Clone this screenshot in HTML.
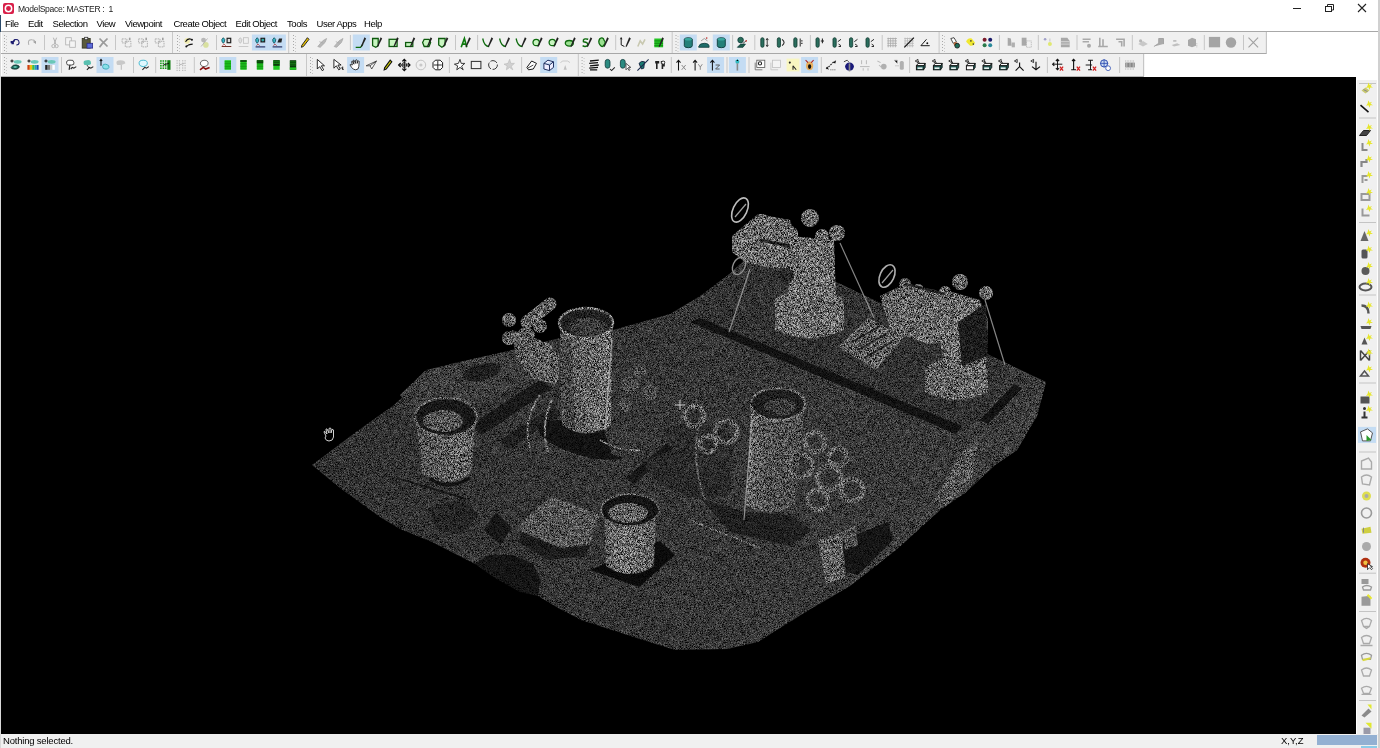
<!DOCTYPE html>
<html><head><meta charset="utf-8"><style>
html,body{margin:0;padding:0;width:1380px;height:748px;overflow:hidden;background:#fff;font-family:"Liberation Sans",sans-serif;}
.t{position:absolute;white-space:pre;color:#000;font-size:9.5px;line-height:12px;letter-spacing:-0.45px;transform:translateZ(0);}
</style></head><body>
<svg width="1380" height="748" style="position:absolute;left:0;top:0">
<rect x="0" y="0" width="1380" height="748" fill="#ffffff"/>
<rect x="0" y="15" width="1" height="17" fill="#2a4a6a"/>
<rect x="0" y="32" width="1" height="716" fill="#d8d8d8"/>
<rect x="1378" y="0" width="2" height="748" fill="#d0d0d0"/>
<!-- title icon -->
<rect x="3" y="3" width="11" height="11" rx="2" fill="#d81e48"/>
<circle cx="8.5" cy="8.5" r="3.2" fill="none" stroke="#fff" stroke-width="1.5"/>
<!-- window controls -->
<rect x="1293" y="8" width="8" height="1" fill="#222"/>
<rect x="1325.5" y="6.5" width="6" height="5" fill="none" stroke="#222" stroke-width="1"/>
<path d="M1327.5 6.5 L1327.5 4.5 L1333.5 4.5 L1333.5 10 L1331.5 10" fill="none" stroke="#222" stroke-width="1"/>
<path d="M1358 4 L1366 12 M1366 4 L1358 12" stroke="#222" stroke-width="1.1"/>
<!-- toolbar bands -->
<rect x="1" y="31" width="1377" height="1" fill="#a8a8a8"/>
<rect x="2" y="32" width="1265" height="21" fill="#f0f0f0"/>
<rect x="1" y="53" width="1266" height="1" fill="#a8a8a8"/>
<rect x="1266" y="32" width="1" height="22" fill="#c0c0c0"/>
<rect x="2" y="54" width="1142" height="22" fill="#f0f0f0"/>
<rect x="1" y="76" width="1143" height="1" fill="#b4b4b4"/>
<rect x="1143" y="54" width="1" height="22" fill="#c0c0c0"/>
<rect x="4" y="35" width="1" height="1" fill="#a8a8a8"/><rect x="6" y="36" width="1" height="1" fill="#c8c8c8"/><rect x="4" y="38" width="1" height="1" fill="#a8a8a8"/><rect x="6" y="39" width="1" height="1" fill="#c8c8c8"/><rect x="4" y="41" width="1" height="1" fill="#a8a8a8"/><rect x="6" y="42" width="1" height="1" fill="#c8c8c8"/><rect x="4" y="44" width="1" height="1" fill="#a8a8a8"/><rect x="6" y="45" width="1" height="1" fill="#c8c8c8"/><rect x="4" y="47" width="1" height="1" fill="#a8a8a8"/><rect x="6" y="48" width="1" height="1" fill="#c8c8c8"/><rect x="4" y="50" width="1" height="1" fill="#a8a8a8"/><rect x="6" y="51" width="1" height="1" fill="#c8c8c8"/><g transform="translate(9.1,36.1) scale(0.8)"><path d="M3 9 L7 5 M3 9 L3 6 M3 9 L6 9" stroke="#1a1a6e" stroke-width="2.2" fill="none"/><path d="M6 4.5 Q12 3 12.5 8 Q12.5 11 9 11" stroke="#1a1a6e" stroke-width="1.3" fill="none"/></g><g transform="translate(25.6,36.1) scale(0.8)"><path d="M4 11 Q2 4 8 4.5 Q11 4.5 12 7" stroke="#b0b0b0" stroke-width="1.3" fill="none"/><path d="M13 10 L9 7 L13 6 Z" fill="#a0a0a0"/></g><rect x="44" y="35" width="1" height="15" fill="#c6c6c6"/><g transform="translate(48.6,36.1) scale(0.8)"><path d="M6 2 L9 10 M10 2 L7 10" stroke="#a8a8a8" stroke-width="1.1" fill="none"/><circle cx="6" cy="12.5" r="2" fill="none" stroke="#a8a8a8"/><circle cx="10" cy="12.5" r="2" fill="none" stroke="#a8a8a8"/></g><g transform="translate(64.1,36.1) scale(0.8)"><rect x="2" y="2" width="7" height="9" fill="#f4f4f4" stroke="#b0b0b0"/><rect x="7" y="6" width="7" height="8" fill="#f4f4f4" stroke="#b0b0b0"/></g><g transform="translate(80.6,36.1) scale(0.8)"><rect x="2" y="3" width="10" height="12" fill="#5a5a3a" stroke="#2e2e1e"/><rect x="5" y="1.5" width="4" height="3" fill="#e8e8e8" stroke="#333"/><rect x="8" y="9" width="7" height="6" fill="#5b6bd8" stroke="#2a2a8a"/></g><g transform="translate(97.1,36.1) scale(0.8)"><path d="M3 3 L13 13 M13 3 L6 10 L3 14" stroke="#9a9a9a" stroke-width="2.2" fill="none"/></g><rect x="115" y="35" width="1" height="15" fill="#c6c6c6"/><g transform="translate(120.1,36.1) scale(0.8)"><rect x="2.5" y="3.5" width="6" height="5" fill="none" stroke="#a0a0a0" stroke-dasharray="2 1"/><rect x="6.5" y="6.5" width="7" height="7" fill="none" stroke="#a0a0a0" stroke-dasharray="2 1"/><rect x="11" y="2" width="2" height="3" fill="#a0a0a0"/></g><g transform="translate(136.6,36.1) scale(0.8)"><rect x="2.5" y="3.5" width="6" height="5" fill="none" stroke="#a0a0a0" stroke-dasharray="2 1"/><rect x="6.5" y="6.5" width="7" height="7" fill="none" stroke="#a0a0a0" stroke-dasharray="2 1"/><rect x="11" y="2" width="2" height="3" fill="#a0a0a0"/></g><g transform="translate(153.2,36.1) scale(0.8)"><rect x="2.5" y="3.5" width="6" height="5" fill="none" stroke="#a0a0a0" stroke-dasharray="2 1"/><rect x="6.5" y="6.5" width="7" height="7" fill="none" stroke="#a0a0a0" stroke-dasharray="2 1"/><rect x="11" y="2" width="2" height="3" fill="#a0a0a0"/></g><rect x="172" y="32" width="1" height="21" fill="#c8c8c8"/><rect x="177" y="35" width="1" height="1" fill="#a8a8a8"/><rect x="179" y="36" width="1" height="1" fill="#c8c8c8"/><rect x="177" y="38" width="1" height="1" fill="#a8a8a8"/><rect x="179" y="39" width="1" height="1" fill="#c8c8c8"/><rect x="177" y="41" width="1" height="1" fill="#a8a8a8"/><rect x="179" y="42" width="1" height="1" fill="#c8c8c8"/><rect x="177" y="44" width="1" height="1" fill="#a8a8a8"/><rect x="179" y="45" width="1" height="1" fill="#c8c8c8"/><rect x="177" y="47" width="1" height="1" fill="#a8a8a8"/><rect x="179" y="48" width="1" height="1" fill="#c8c8c8"/><rect x="177" y="50" width="1" height="1" fill="#a8a8a8"/><rect x="179" y="51" width="1" height="1" fill="#c8c8c8"/><g transform="translate(182.3,36.1) scale(0.8)"><circle cx="6" cy="6" r="3.5" fill="#f0eaa0" opacity="0.8"/><path d="M4 7 Q7 2 11 4" stroke="#111" stroke-width="1.4" fill="none"/><circle cx="12" cy="4.5" r="1.3" fill="#111"/><path d="M5 13 L8 11 Q11 10 13 10" stroke="#111" stroke-width="1.4" fill="none"/><circle cx="5" cy="13" r="1.2" fill="#111"/></g><g transform="translate(197.9,36.1) scale(0.8)"><circle cx="7" cy="5" r="3" fill="#b8b8b8"/><circle cx="10" cy="11" r="3.5" fill="#d8e0a0"/><path d="M4 13 L12 3" stroke="#aaa" fill="none"/></g><rect x="216" y="35" width="1" height="15" fill="#c6c6c6"/><g transform="translate(220.1,36.1) scale(0.8)"><path d="M4 2 Q1 4 2.5 7 L4 9 L5.5 7 Q7 4 4 2 Z" fill="#35b8c8" stroke="#0d3e4a" stroke-width="0.9"/><rect x="8" y="2" width="6" height="7" fill="#222"/><rect x="9.5" y="3.5" width="3" height="4" fill="#ddd"/><path d="M2 13 L14 13" stroke="#6a2a20" stroke-width="1.2"/><path d="M3 12 L5 10 L7 12" stroke="#b03030" stroke-width="1" fill="none"/></g><g transform="translate(237.1,36.1) scale(0.8)"><path d="M4 2 Q1 4 2.5 7 L4 9 L5.5 7 Q7 4 4 2 Z" fill="#e0e0e0" stroke="#b8b8b8" stroke-width="0.9"/><rect x="8" y="2" width="6" height="7" fill="none" stroke="#c0c0c0"/><path d="M2 13 L14 13" stroke="#c8c8c8" stroke-width="1.2"/></g><rect x="251.9" y="34.5" width="17" height="16" fill="#c4dcf3"/><g transform="translate(254,36.1) scale(0.8)"><path d="M4 2 Q1 4 2.5 7 L4 9 L5.5 7 Q7 4 4 2 Z" fill="#35b8c8" stroke="#0d3e4a" stroke-width="0.9"/><rect x="8" y="2" width="6" height="6" fill="#222"/><circle cx="11" cy="5" r="1.8" fill="#3aa"/><path d="M2 13.5 L14 13.5" stroke="#111a50" stroke-width="1.3"/><path d="M3 12 L5 10 L7 12" stroke="#b03030" stroke-width="1" fill="none"/></g><rect x="268.9" y="34.5" width="17" height="16" fill="#c4dcf3"/><g transform="translate(271,36.1) scale(0.8)"><path d="M4 2 Q1 4 2.5 7 L4 9 L5.5 7 Q7 4 4 2 Z" fill="#35b8c8" stroke="#0d3e4a" stroke-width="0.9"/><path d="M8 8 L10 3 L14 3 L13 8 Z" fill="#222"/><path d="M2 13.5 L14 13.5" stroke="#111a50" stroke-width="1.3"/><path d="M3 12 L5 10 L7 12" stroke="#b03030" stroke-width="1" fill="none"/></g><rect x="288.2" y="32" width="1" height="21" fill="#c8c8c8"/><rect x="293" y="35" width="1" height="1" fill="#a8a8a8"/><rect x="295" y="36" width="1" height="1" fill="#c8c8c8"/><rect x="293" y="38" width="1" height="1" fill="#a8a8a8"/><rect x="295" y="39" width="1" height="1" fill="#c8c8c8"/><rect x="293" y="41" width="1" height="1" fill="#a8a8a8"/><rect x="295" y="42" width="1" height="1" fill="#c8c8c8"/><rect x="293" y="44" width="1" height="1" fill="#a8a8a8"/><rect x="295" y="45" width="1" height="1" fill="#c8c8c8"/><rect x="293" y="47" width="1" height="1" fill="#a8a8a8"/><rect x="295" y="48" width="1" height="1" fill="#c8c8c8"/><rect x="293" y="50" width="1" height="1" fill="#a8a8a8"/><rect x="295" y="51" width="1" height="1" fill="#c8c8c8"/><g transform="translate(298.6,36.1) scale(0.8)"><path d="M11 2 L13 4 L6 13 L3.5 14 L4 11.5 Z" fill="#e8c000" stroke="#222" stroke-width="1.2"/></g><g transform="translate(316.2,36.1) scale(0.8)"><path d="M2 13 L8 6 L13 3 L11 8 L5 14 Z M4 7 L9 9" fill="#b8b8b8" stroke="#a8a8a8"/></g><g transform="translate(332.6,36.1) scale(0.8)"><path d="M2 13 L8 6 L13 3 L11 8 L5 14 Z M4 7 L9 9" fill="#b8b8b8" stroke="#a8a8a8"/></g><rect x="349.9" y="35" width="1" height="15" fill="#c6c6c6"/><rect x="352.8" y="34.5" width="17" height="16" fill="#c4dcf3"/><g transform="translate(354.9,36.1) scale(0.8)"><path d="M1 14 L7 14 L10 10" stroke="#0d6a0d" stroke-width="1.6" fill="none"/><path d="M12 1.5 L14 3 L9 13 L7.5 14 L8 11.5 Z" fill="#222"/></g><g transform="translate(371,36.1) scale(0.8)"><path d="M2 3 L9 3 L9 12 L6 14 L2 12 Z" fill="#c8f5c0" stroke="#0d5a0d" stroke-width="1.6"/><path d="M12 1.5 L14 3 L9 13 L7.5 14 L8 11.5 Z" fill="#222"/></g><g transform="translate(387.5,36.1) scale(0.8)"><rect x="2" y="4" width="10" height="9" fill="#c8f5c0" stroke="#0d5a0d" stroke-width="1.6"/><path d="M12 1.5 L14 3 L9 13 L7.5 14 L8 11.5 Z" fill="#222"/></g><g transform="translate(404,36.1) scale(0.8)"><rect x="2" y="8" width="9" height="5" fill="#c8f5c0" stroke="#0d5a0d" stroke-width="1.6"/><path d="M12 1.5 L14 3 L9 13 L7.5 14 L8 11.5 Z" fill="#222"/></g><g transform="translate(421,36.1) scale(0.8)"><path d="M4 4 L10 4 L12 8 L10 13 L4 13 L2 8 Z" fill="#c8f5c0" stroke="#0d5a0d" stroke-width="1.6"/><path d="M12 1.5 L14 3 L9 13 L7.5 14 L8 11.5 Z" fill="#222"/></g><g transform="translate(437.1,36.1) scale(0.8)"><path d="M2 3 L10 3 L10 11 L6 14 L2 11 Z" fill="#c8f5c0" stroke="#0d5a0d" stroke-width="1.6"/><path d="M12 1.5 L14 3 L9 13 L7.5 14 L8 11.5 Z" fill="#222"/></g><rect x="455" y="35" width="1" height="15" fill="#c6c6c6"/><g transform="translate(459.6,36.1) scale(0.8)"><path d="M2 14 L6 3 L9 14 M3.5 10 L8 10" stroke="#0d7a0d" stroke-width="2" fill="none"/><path d="M12 1.5 L14 3 L9 13 L7.5 14 L8 11.5 Z" fill="#222"/></g><rect x="477.1" y="35" width="1" height="15" fill="#c6c6c6"/><g transform="translate(481.9,36.1) scale(0.8)"><path d="M1 3 Q3 13 9 13" stroke="#0d6a0d" stroke-width="1.6" fill="none"/><path d="M12 1.5 L14 3 L9 13 L7.5 14 L8 11.5 Z" fill="#222"/></g><g transform="translate(498.8,36.1) scale(0.8)"><path d="M1 3 Q3 13 9 13" stroke="#0d6a0d" stroke-width="1.6" fill="none"/><path d="M12 1.5 L14 3 L9 13 L7.5 14 L8 11.5 Z" fill="#222"/></g><g transform="translate(515.3,36.1) scale(0.8)"><path d="M1 3 Q3 13 9 13" stroke="#0d6a0d" stroke-width="1.6" fill="none"/><path d="M12 1.5 L14 3 L9 13 L7.5 14 L8 11.5 Z" fill="#222"/></g><g transform="translate(531.4,36.1) scale(0.8)"><circle cx="6" cy="8" r="4" fill="#c8f5c0" stroke="#0d6a0d" stroke-width="1.6"/><path d="M12 1.5 L14 3 L9 13 L7.5 14 L8 11.5 Z" fill="#222"/></g><g transform="translate(547.5,36.1) scale(0.8)"><circle cx="6" cy="8" r="4" fill="#c8f5c0" stroke="#0d6a0d" stroke-width="1.6"/><path d="M12 1.5 L14 3 L9 13 L7.5 14 L8 11.5 Z" fill="#222"/></g><g transform="translate(564.5,36.1) scale(0.8)"><ellipse cx="6" cy="9" rx="5" ry="3.5" fill="#9ae090" stroke="#0d6a0d" stroke-width="1.6"/><path d="M12 1.5 L14 3 L9 13 L7.5 14 L8 11.5 Z" fill="#222"/></g><g transform="translate(581,36.1) scale(0.8)"><path d="M9 4 Q2 2 3 7 Q10 8 8 12 Q5 14 2 12" stroke="#0d6a0d" stroke-width="1.8" fill="none"/><path d="M12 1.5 L14 3 L9 13 L7.5 14 L8 11.5 Z" fill="#222"/></g><g transform="translate(597.6,36.1) scale(0.8)"><path d="M3 3 Q7 1 8 5 Q11 8 8 11 Q6 15 3 11 Q0 7 3 3 Z" fill="#9ae090" stroke="#0d6a0d" stroke-width="1.6"/><path d="M12 1.5 L14 3 L9 13 L7.5 14 L8 11.5 Z" fill="#222"/></g><rect x="615.2" y="35" width="1" height="15" fill="#c6c6c6"/><g transform="translate(619.6,36.1) scale(0.8)"><path d="M2 2 L2 11 L6 13" stroke="#111" stroke-width="1.2" fill="none"/><path d="M1 4 L2 2 L3 4" stroke="#111" fill="none"/><path d="M12 1.5 L14 3 L9 13 L7.5 14 L8 11.5 Z" fill="#222"/></g><g transform="translate(636.2,36.1) scale(0.8)"><path d="M2 13 L5 6 L8 10 L11 4" stroke="#c8c8b0" stroke-width="2" fill="none"/></g><g transform="translate(652.7,36.1) scale(0.8)"><rect x="2" y="3" width="11" height="11" fill="#22c422"/><path d="M2 6 L13 6 M2 9 L13 9 M2 12 L13 12" stroke="#0d6a0d" stroke-width="0.8"/><path d="M12 1.5 L14 3 L9 13 L7.5 14 L8 11.5 Z" fill="#222"/></g><rect x="671.7" y="32" width="1" height="21" fill="#c8c8c8"/><rect x="675.5" y="35" width="1" height="1" fill="#a8a8a8"/><rect x="677.5" y="36" width="1" height="1" fill="#c8c8c8"/><rect x="675.5" y="38" width="1" height="1" fill="#a8a8a8"/><rect x="677.5" y="39" width="1" height="1" fill="#c8c8c8"/><rect x="675.5" y="41" width="1" height="1" fill="#a8a8a8"/><rect x="677.5" y="42" width="1" height="1" fill="#c8c8c8"/><rect x="675.5" y="44" width="1" height="1" fill="#a8a8a8"/><rect x="677.5" y="45" width="1" height="1" fill="#c8c8c8"/><rect x="675.5" y="47" width="1" height="1" fill="#a8a8a8"/><rect x="677.5" y="48" width="1" height="1" fill="#c8c8c8"/><rect x="675.5" y="50" width="1" height="1" fill="#a8a8a8"/><rect x="677.5" y="51" width="1" height="1" fill="#c8c8c8"/><rect x="679.8" y="34.5" width="17" height="16" fill="#c4dcf3"/><g transform="translate(681.9,36.1) scale(0.8)"><path d="M3 4 Q3 2 8 2 Q13 2 13 4 L13 12 Q13 14.5 8 14.5 Q3 14.5 3 12 Z" fill="#24807a" stroke="#0d3a3a" stroke-width="1.1"/><ellipse cx="8" cy="4" rx="4.5" ry="1.5" fill="#3aa8a0"/></g><g transform="translate(697.9,36.1) scale(0.8)"><path d="M1 13 Q2 9 8 9 Q14 9 14 13 L14 14 L1 14 Z" fill="#1f6e6a" stroke="#0d3a3a"/><path d="M4 6 L8 3 L12 6" stroke="#888" fill="none"/><circle cx="11" cy="2.5" r="1" fill="#c03030"/></g><rect x="712.8" y="34.5" width="17" height="16" fill="#c4dcf3"/><g transform="translate(714.9,36.1) scale(0.8)"><path d="M3 4 Q3 2 8 2 Q13 2 13 4 L13 12 Q13 14.5 8 14.5 Q3 14.5 3 12 Z" fill="#24807a" stroke="#0d3a3a" stroke-width="1.1"/><ellipse cx="8" cy="4" rx="4.5" ry="1.5" fill="#3aa8a0"/></g><rect x="732.1" y="35" width="1" height="15" fill="#c6c6c6"/><g transform="translate(735.8,36.1) scale(0.8)"><circle cx="6" cy="5" r="3.5" fill="#2a6e5a" stroke="#0d3a3a"/><path d="M2 14 L6 10 L12 10 L9 14 Z" fill="#1f5e4a" stroke="#0d3a3a"/><path d="M9 9 L13 6" stroke="#333"/><circle cx="13" cy="6" r="1" fill="#c03030"/></g><rect x="754.3" y="35" width="1" height="15" fill="#c6c6c6"/><g transform="translate(758.4,36.1) scale(0.8)"><rect x="3" y="2" width="4" height="12" rx="2" fill="#2b6e5e" stroke="#113a30"/><path d="M11 3 L11 13 M9.5 5 L11 3 L12.5 5 M9.5 11 L11 13 L12.5 11" stroke="#222" stroke-width="1.1" fill="none"/></g><g transform="translate(774.9,36.1) scale(0.8)"><rect x="3" y="2" width="4" height="12" rx="2" fill="#2b6e5e" stroke="#113a30"/><path d="M9 4 Q14 8 9 12" stroke="#222" stroke-width="1.3" fill="none"/></g><g transform="translate(791.4,36.1) scale(0.8)"><rect x="3" y="2" width="4" height="12" rx="2" fill="#2b6e5e" stroke="#113a30"/><path d="M11 3 L11 13 M12 6 L14 6 M12 9 L14 9" stroke="#222" stroke-width="1.2" fill="none"/></g><rect x="809.9" y="35" width="1" height="15" fill="#c6c6c6"/><g transform="translate(813.6,36.1) scale(0.8)"><rect x="3" y="2" width="4" height="12" rx="2" fill="#2b6e5e" stroke="#113a30"/><path d="M11 3 L11 9 M9 6 L13 6" stroke="#222" stroke-width="1.3" fill="none"/></g><g transform="translate(830.6,36.1) scale(0.8)"><rect x="3" y="2" width="4" height="12" rx="2" fill="#2b6e5e" stroke="#113a30"/><path d="M9 7 L13 4 M10 10 L13 12 M10 13 L13 13" stroke="#222" stroke-width="1.2" fill="none"/></g><g transform="translate(847.1,36.1) scale(0.8)"><rect x="3" y="2" width="4" height="12" rx="2" fill="#2b6e5e" stroke="#113a30"/><path d="M9 7 L13 4 M10 10 L13 12 M10 13 L13 13" stroke="#222" stroke-width="1.2" fill="none"/></g><g transform="translate(863.6,36.1) scale(0.8)"><rect x="3" y="2" width="4" height="12" rx="2" fill="#2b6e5e" stroke="#113a30"/><path d="M9 7 L13 4 M10 10 L13 12 M10 13 L13 13" stroke="#222" stroke-width="1.2" fill="none"/></g><rect x="881.7" y="35" width="1" height="15" fill="#c6c6c6"/><g transform="translate(885.8,36.1) scale(0.8)"><path d="M2 3 L14 3 M2 6 L14 6 M2 9 L14 9 M2 12 L14 12 M3 2 L3 14 M6 2 L6 14 M9 2 L9 14 M12 2 L12 14" stroke="#a8a8a8" stroke-width="1"/></g><g transform="translate(902.7,36.1) scale(0.8)"><path d="M2 3 L14 3 M2 6 L14 6 M2 9 L14 9 M2 12 L14 12 M3 2 L3 14 M6 2 L6 14 M9 2 L9 14 M12 2 L12 14" stroke="#b8b8b8" stroke-width="1"/><path d="M2 14 L14 2" stroke="#111" stroke-width="1.5"/></g><g transform="translate(919.3,36.1) scale(0.8)"><path d="M2 12 L13 12 M2 12 L9 4" stroke="#111" stroke-width="1.2" fill="none"/><circle cx="10" cy="9" r="1.2" fill="#111"/></g><rect x="938.6" y="32" width="1" height="21" fill="#c8c8c8"/><rect x="942" y="35" width="1" height="1" fill="#a8a8a8"/><rect x="944" y="36" width="1" height="1" fill="#c8c8c8"/><rect x="942" y="38" width="1" height="1" fill="#a8a8a8"/><rect x="944" y="39" width="1" height="1" fill="#c8c8c8"/><rect x="942" y="41" width="1" height="1" fill="#a8a8a8"/><rect x="944" y="42" width="1" height="1" fill="#c8c8c8"/><rect x="942" y="44" width="1" height="1" fill="#a8a8a8"/><rect x="944" y="45" width="1" height="1" fill="#c8c8c8"/><rect x="942" y="47" width="1" height="1" fill="#a8a8a8"/><rect x="944" y="48" width="1" height="1" fill="#c8c8c8"/><rect x="942" y="50" width="1" height="1" fill="#a8a8a8"/><rect x="944" y="51" width="1" height="1" fill="#c8c8c8"/><g transform="translate(948.4,36.1) scale(0.8)"><path d="M3 3 L7 2 L10 7 L6 9 Z" fill="#fff" stroke="#222"/><circle cx="9" cy="10" r="2.5" fill="#c07040"/><circle cx="11" cy="12" r="3" fill="#1f6e5a" stroke="#111"/></g><g transform="translate(964.5,36.1) scale(0.8)"><path d="M2 7 Q4 2 9 3 L13 8 Q12 13 7 12 Z" fill="#f0e830"/><circle cx="8" cy="6" r="1" fill="#333"/><circle cx="11" cy="10" r="1" fill="#333"/></g><g transform="translate(981,36.1) scale(0.8)"><circle cx="4.5" cy="4.5" r="2.5" fill="#7a1a2a"/><circle cx="11.5" cy="4.5" r="2.5" fill="#1a1a6a"/><circle cx="4.5" cy="11.5" r="2.5" fill="#2a7a4a"/><circle cx="11.5" cy="11.5" r="2.5" fill="#2a8a9a"/></g><rect x="998.9" y="35" width="1" height="15" fill="#c6c6c6"/><g transform="translate(1004.5,36.1) scale(0.8)"><path d="M4 2 L8 3 L9 12 L4 12 Z" fill="#a8a8a8"/><rect x="9" y="8" width="4" height="6" fill="#b0b0b0"/></g><g transform="translate(1020.1,36.1) scale(0.8)"><rect x="2" y="2" width="6" height="10" fill="#a8a8a8"/><rect x="8" y="6" width="6" height="8" fill="none" stroke="#b0b0b0" stroke-dasharray="1.5 1"/></g><rect x="1037.8" y="35" width="1" height="15" fill="#c6c6c6"/><g transform="translate(1041.9,36.1) scale(0.8)"><circle cx="4" cy="4" r="1.6" fill="#a0a0c8"/><circle cx="10" cy="10" r="2.5" fill="#e0e870"/><path d="M10 3 L10 7" stroke="#bbb"/></g><g transform="translate(1059.3,36.1) scale(0.8)"><path d="M2 2 L10 2 L13 6 L13 14 L2 14 Z" fill="#a8a8a8"/><path d="M2 7 L13 7 M2 10 L13 10" stroke="#e0e0e0"/></g><rect x="1076.5" y="35" width="1" height="15" fill="#c6c6c6"/><g transform="translate(1081,36.1) scale(0.8)"><path d="M2 4 L12 4 M2 7 L10 7" stroke="#aaa" stroke-width="2"/><circle cx="10" cy="12" r="2.5" fill="#aaa"/></g><g transform="translate(1096.6,36.1) scale(0.8)"><path d="M4 2 L4 12 M8 4 L8 12 M2 13 L14 13" stroke="#a8a8a8" stroke-width="2"/></g><g transform="translate(1114.5,36.1) scale(0.8)"><path d="M2 4 L12 4 L12 13 M5 7 L9 7 L9 13" stroke="#a8a8a8" stroke-width="2" fill="none"/></g><rect x="1131.8" y="35" width="1" height="15" fill="#c6c6c6"/><g transform="translate(1136.6,36.1) scale(0.8)"><path d="M2 10 L8 6 L14 10 L8 13 Z" fill="#c8c8c8"/><circle cx="5" cy="6" r="2" fill="#b8b8b8"/></g><g transform="translate(1152.3,36.1) scale(0.8)"><path d="M2 13 L8 9 L8 3 L14 3 L14 10" fill="#aaa" stroke="#999"/></g><g transform="translate(1169.2,36.1) scale(0.8)"><path d="M3 11 L10 9 L14 11 L6 13 Z" fill="#c0c0c0"/><path d="M5 6 L9 6" stroke="#b8b8b8" stroke-width="2"/></g><g transform="translate(1185.6,36.1) scale(0.8)"><path d="M3 5 L8 2 L13 4 L13 12 L8 14 L3 12 Z" fill="#a8a8a8"/><path d="M14 9 L14 14" stroke="#aaa" stroke-dasharray="1 1"/></g><rect x="1203.8" y="35" width="1" height="15" fill="#c6c6c6"/><g transform="translate(1208.1,36.1) scale(0.8)"><rect x="1" y="1" width="14" height="13" fill="#a4a4a4"/></g><g transform="translate(1224.6,36.1) scale(0.8)"><circle cx="8" cy="8" r="6.5" fill="#a4a4a4"/></g><rect x="1243" y="35" width="1" height="15" fill="#c6c6c6"/><g transform="translate(1246.9,36.1) scale(0.8)"><path d="M2 2 L14 14 M14 2 L2 14" stroke="#a0a0a0" stroke-width="1.4"/></g><rect x="1265.8" y="32" width="1" height="21" fill="#c8c8c8"/>
<rect x="4" y="57" width="1" height="1" fill="#a8a8a8"/><rect x="6" y="58" width="1" height="1" fill="#c8c8c8"/><rect x="4" y="60" width="1" height="1" fill="#a8a8a8"/><rect x="6" y="61" width="1" height="1" fill="#c8c8c8"/><rect x="4" y="63" width="1" height="1" fill="#a8a8a8"/><rect x="6" y="64" width="1" height="1" fill="#c8c8c8"/><rect x="4" y="66" width="1" height="1" fill="#a8a8a8"/><rect x="6" y="67" width="1" height="1" fill="#c8c8c8"/><rect x="4" y="69" width="1" height="1" fill="#a8a8a8"/><rect x="6" y="70" width="1" height="1" fill="#c8c8c8"/><rect x="4" y="72" width="1" height="1" fill="#a8a8a8"/><rect x="6" y="73" width="1" height="1" fill="#c8c8c8"/><g transform="translate(9.6,58.6) scale(0.8)"><path d="M1 3 L5 3 M3 1 L3 5" stroke="#111" stroke-width="1.3"/><ellipse cx="10" cy="4" rx="5" ry="2.3" fill="#6ac8b8"/><path d="M2 11 Q4 7 9 8 Q13 9 12 11 Q10 14 5 13 Q2 13 2 11 Z" fill="#1a6a5a" stroke="#0d2a2a"/><ellipse cx="7" cy="10.5" rx="2.2" ry="1" fill="#7ad8c8"/></g><g transform="translate(26.6,58.6) scale(0.8)"><path d="M1 3 L5 3 M3 1 L3 5" stroke="#111" stroke-width="1.3"/><ellipse cx="10" cy="4" rx="5" ry="2.3" fill="#6ac8b8"/><rect x="1" y="8" width="3" height="6" fill="#d04010"/><rect x="4" y="8" width="3" height="6" fill="#f0c010"/><rect x="7" y="8" width="3" height="6" fill="#40c040"/><rect x="10" y="8" width="2.5" height="6" fill="#20a0c0"/><rect x="12.5" y="8" width="2.5" height="6" fill="#1050b0"/></g><rect x="41.5" y="57" width="17" height="16" fill="#c4dcf3"/><g transform="translate(43.6,58.6) scale(0.8)"><path d="M1 3 L5 3 M3 1 L3 5" stroke="#111" stroke-width="1.3"/><ellipse cx="10" cy="4" rx="5" ry="2.3" fill="#6ac8b8"/><rect x="2" y="8" width="3" height="6" fill="#222"/><rect x="5" y="8" width="3" height="6" fill="#777"/><rect x="8" y="8" width="3" height="6" fill="#ccc"/><rect x="11" y="8" width="3" height="6" fill="#fff"/></g><rect x="61" y="57" width="1" height="16" fill="#c6c6c6"/><g transform="translate(65.1,58.6) scale(0.8)"><path d="M2 6 Q1 2 6 2 Q11 1 11 5 Q12 8 8 8 L4 8 Q2 8 2 6 Z" fill="#fff" stroke="#222"/><path d="M6 8 L5 14" stroke="#222" stroke-width="1.4"/><path d="M7 13 L9 11 L11 12 L14 10" stroke="#222" stroke-width="1.4" fill="none"/></g><g transform="translate(82.1,58.6) scale(0.8)"><path d="M2 6 Q1 2 6 2 Q11 1 11 5 Q12 8 8 8 L4 8 Q2 8 2 6 Z" fill="#5ac0b0"/><path d="M6 8 L9 12" stroke="#222" stroke-width="1"/><path d="M6 14 L9 11 L11 12 L14 10" stroke="#222" stroke-width="1.4" fill="none"/></g><rect x="96.5" y="57" width="17" height="16" fill="#c4dcf3"/><g transform="translate(98.6,58.6) scale(0.8)"><path d="M3 1 L3 9 M1.5 3 L3 1 L4.5 3" stroke="#111" stroke-width="1.3" fill="none"/><path d="M5 10 Q5 6 9 7 Q14 8 13 11 Q12 14 8 13 Q5 13 5 10 Z" fill="#8ae0e8" stroke="#30a0b0"/></g><g transform="translate(114.9,58.6) scale(0.8)"><path d="M2 6 Q1 2 7 2 Q13 2 13 6 L8 8 L3 8 Z" fill="#c8c8c8"/><path d="M8 8 L8 14" stroke="#bbb" stroke-width="1.3"/></g><rect x="133" y="57" width="1" height="16" fill="#c6c6c6"/><g transform="translate(137.6,58.6) scale(0.8)"><path d="M2 7 Q1 2 7 2 Q13 2 12 7 Q11 10 7 10 Q3 10 2 7 Z" fill="#e0f8ff" stroke="#40b8d0" stroke-width="1.2"/><path d="M6 14 L9 11 L11 12 L14 10" stroke="#222" stroke-width="1.3" fill="none"/></g><rect x="155.2" y="57" width="1" height="16" fill="#c6c6c6"/><g transform="translate(159.3,58.6) scale(0.8)"><rect x="1" y="2" width="2" height="2" fill="#1a9a1a"/><rect x="1" y="5" width="2" height="2" fill="#1a9a1a"/><rect x="1" y="8" width="2" height="2" fill="#1a9a1a"/><rect x="1" y="11" width="2" height="2" fill="#1a9a1a"/><rect x="4" y="2" width="2" height="2" fill="#1a9a1a"/><rect x="4" y="5" width="2" height="2" fill="#1a9a1a"/><rect x="4" y="8" width="2" height="2" fill="#1a9a1a"/><rect x="4" y="11" width="2" height="2" fill="#1a9a1a"/><rect x="7" y="2" width="2" height="2" fill="#1a9a1a"/><rect x="7" y="5" width="2" height="2" fill="#1a9a1a"/><rect x="7" y="8" width="2" height="2" fill="#1a9a1a"/><rect x="7" y="11" width="2" height="2" fill="#1a9a1a"/><rect x="10" y="2" width="4" height="12" fill="#0d7a0d"/><path d="M5 8 L12 6" stroke="#111" stroke-width="1.2"/></g><g transform="translate(174.9,58.6) scale(0.8)"><rect x="2" y="2" width="1.5" height="1.5" fill="#b8b8b8"/><rect x="2" y="5" width="1.5" height="1.5" fill="#b8b8b8"/><rect x="2" y="8" width="1.5" height="1.5" fill="#b8b8b8"/><rect x="2" y="11" width="1.5" height="1.5" fill="#b8b8b8"/><rect x="2" y="14" width="1.5" height="1.5" fill="#b8b8b8"/><rect x="5" y="2" width="1.5" height="1.5" fill="#b8b8b8"/><rect x="5" y="5" width="1.5" height="1.5" fill="#b8b8b8"/><rect x="5" y="8" width="1.5" height="1.5" fill="#b8b8b8"/><rect x="5" y="11" width="1.5" height="1.5" fill="#b8b8b8"/><rect x="5" y="14" width="1.5" height="1.5" fill="#b8b8b8"/><rect x="9" y="2" width="1.5" height="1.5" fill="#b8b8b8"/><rect x="9" y="5" width="1.5" height="1.5" fill="#b8b8b8"/><rect x="9" y="8" width="1.5" height="1.5" fill="#b8b8b8"/><rect x="9" y="11" width="1.5" height="1.5" fill="#b8b8b8"/><rect x="9" y="14" width="1.5" height="1.5" fill="#b8b8b8"/><rect x="12" y="2" width="1.5" height="1.5" fill="#b8b8b8"/><rect x="12" y="5" width="1.5" height="1.5" fill="#b8b8b8"/><rect x="12" y="8" width="1.5" height="1.5" fill="#b8b8b8"/><rect x="12" y="11" width="1.5" height="1.5" fill="#b8b8b8"/><rect x="12" y="14" width="1.5" height="1.5" fill="#b8b8b8"/><path d="M5 8 L12 6" stroke="#aaa"/></g><rect x="193.8" y="57" width="1" height="16" fill="#c6c6c6"/><g transform="translate(198.4,58.6) scale(0.8)"><path d="M3 8 Q1 3 7 2 Q13 2 12 7 Q11 10 7 10 Q4 10 3 8 Z" fill="#fff" stroke="#333" stroke-width="0.9"/><path d="M2 14 L6 11 L9 13 L14 11" stroke="#8a1010" stroke-width="2" fill="none"/></g><rect x="216" y="57" width="1" height="16" fill="#c6c6c6"/><rect x="219.3" y="57" width="17" height="16" fill="#c4dcf3"/><g transform="translate(221.4,58.6) scale(0.8)"><rect x="4" y="2" width="8" height="12" fill="#21d121"/><path d="M4 4 L12 4" stroke="#0a7a0a" stroke-width="0.7"/><path d="M4 6 L12 6" stroke="#0a7a0a" stroke-width="0.7"/><path d="M4 8 L12 8" stroke="#0a7a0a" stroke-width="0.7"/><path d="M4 10 L12 10" stroke="#0a7a0a" stroke-width="0.7"/><path d="M4 12 L12 12" stroke="#0a7a0a" stroke-width="0.7"/></g><g transform="translate(237.1,58.6) scale(0.8)"><rect x="4" y="2" width="8" height="12" fill="#21c821"/><rect x="4" y="2" width="8" height="2" fill="#0b3a0b"/><path d="M4 6 L12 6" stroke="#0a7a0a" stroke-width="0.7"/><path d="M4 8 L12 8" stroke="#0a7a0a" stroke-width="0.7"/><path d="M4 10 L12 10" stroke="#0a7a0a" stroke-width="0.7"/><path d="M4 12 L12 12" stroke="#0a7a0a" stroke-width="0.7"/></g><g transform="translate(253.6,58.6) scale(0.8)"><rect x="4" y="2" width="8" height="12" fill="#21c821"/><rect x="4" y="2" width="8" height="4" fill="#0b3a0b"/><path d="M4 4 L12 4" stroke="#0a7a0a" stroke-width="0.7"/><path d="M4 8 L12 8" stroke="#0a7a0a" stroke-width="0.7"/><path d="M4 10 L12 10" stroke="#0a7a0a" stroke-width="0.7"/><path d="M4 12 L12 12" stroke="#0a7a0a" stroke-width="0.7"/></g><g transform="translate(270.1,58.6) scale(0.8)"><rect x="4" y="2" width="8" height="12" fill="#21c821"/><rect x="4" y="2" width="8" height="7" fill="#0b3a0b"/><path d="M4 4 L12 4" stroke="#21c821" stroke-width="0.7"/><path d="M4 6 L12 6" stroke="#21c821" stroke-width="0.7"/></g><g transform="translate(286.6,58.6) scale(0.8)"><rect x="4" y="2" width="8" height="12" fill="#0b3a0b"/><rect x="4" y="11" width="8" height="3" fill="#21c821"/><path d="M4 4 L12 4" stroke="#21a821" stroke-width="0.7"/><path d="M4 6 L12 6" stroke="#21a821" stroke-width="0.7"/><path d="M4 8 L12 8" stroke="#21a821" stroke-width="0.7"/></g><rect x="306" y="54" width="1" height="22" fill="#c8c8c8"/><rect x="310" y="57" width="1" height="1" fill="#a8a8a8"/><rect x="312" y="58" width="1" height="1" fill="#c8c8c8"/><rect x="310" y="60" width="1" height="1" fill="#a8a8a8"/><rect x="312" y="61" width="1" height="1" fill="#c8c8c8"/><rect x="310" y="63" width="1" height="1" fill="#a8a8a8"/><rect x="312" y="64" width="1" height="1" fill="#c8c8c8"/><rect x="310" y="66" width="1" height="1" fill="#a8a8a8"/><rect x="312" y="67" width="1" height="1" fill="#c8c8c8"/><rect x="310" y="69" width="1" height="1" fill="#a8a8a8"/><rect x="312" y="70" width="1" height="1" fill="#c8c8c8"/><rect x="310" y="72" width="1" height="1" fill="#a8a8a8"/><rect x="312" y="73" width="1" height="1" fill="#c8c8c8"/><g transform="translate(314.9,58.6) scale(0.8)"><path d="M3 1 L3 13 L6 10 L9 15 L11 14 L8 9 L12 9 Z" fill="#fff" stroke="#111" stroke-width="1.1"/></g><g transform="translate(332.3,58.6) scale(0.8)"><path d="M2 1 L2 12 L5 9 L8 14 L10 13 L7 8 L11 8 Z" fill="#fff" stroke="#111" stroke-width="1.1"/><path d="M11 11 L14 14 M13 10 L13 14" stroke="#111" stroke-width="1.2"/></g><rect x="347.1" y="57" width="17" height="16" fill="#c4dcf3"/><g transform="translate(349.2,58.6) scale(0.8)"><path d="M4 8 L3 4 Q3 3 4 3.5 L6 7 L5 2.5 Q5 1.5 6 2 L8 6 L8 2 Q9 1 10 2 L10 6 L11 3 Q12 2.5 12.5 3.5 L12 10 Q12 14 8 14 Q5 14 3 11 L1 8 Q1 7 2 7.5 Z" fill="#fff" stroke="#111" stroke-width="1"/></g><g transform="translate(365.3,58.6) scale(0.8)"><path d="M1 9 L14 3 L8 13 L6 9 Z M6 9 L14 3" fill="#fff" stroke="#333" stroke-width="1"/></g><g transform="translate(381.4,58.6) scale(0.8)"><path d="M11 2 L13 4 L6 13 L3.5 14 L4 11.5 Z" fill="#d8d800" stroke="#111" stroke-width="1.4"/></g><g transform="translate(397.9,58.6) scale(0.8)"><path d="M8 1 L8 15 M1 8 L15 8" stroke="#111" stroke-width="1.3"/><path d="M5.5 3.5 L8 1 L10.5 3.5 M5.5 12.5 L8 15 L10.5 12.5 M3.5 5.5 L1 8 L3.5 10.5 M12.5 5.5 L15 8 L12.5 10.5" stroke="#111" stroke-width="1.6" fill="none"/><circle cx="8" cy="8" r="3" fill="none" stroke="#111"/></g><g transform="translate(414.5,58.6) scale(0.8)"><circle cx="8" cy="8" r="6" fill="none" stroke="#c0c0c0" stroke-width="1.2"/><circle cx="8" cy="8" r="2" fill="#c8c8c8"/></g><g transform="translate(431.4,58.6) scale(0.8)"><path d="M5 2 L11 2 L14 5 L14 11 L11 14 L5 14 L2 11 L2 5 Z" fill="#fff" stroke="#111" stroke-width="1.2"/><path d="M8 3 L8 13 M3 8 L13 8" stroke="#111" stroke-width="1.1"/></g><rect x="448.9" y="57" width="1" height="16" fill="#c6c6c6"/><g transform="translate(453.6,58.6) scale(0.8)"><path d="M8 1 L9.5 6 L14 6 L10 9.5 L12 14 L8 11 L4 14 L5 9 L1 7 L6 6 Z" fill="#fff" stroke="#222" stroke-width="1.1"/></g><g transform="translate(470.1,58.6) scale(0.8)"><rect x="1.5" y="3.5" width="12" height="9" fill="none" stroke="#333" stroke-width="1.3"/></g><g transform="translate(486.6,58.6) scale(0.8)"><circle cx="8" cy="8" r="5.5" fill="none" stroke="#333" stroke-width="1.2" stroke-dasharray="9 2"/></g><g transform="translate(503.2,58.6) scale(0.8)"><path d="M8 1 L9.5 6 L14 6 L10 9.5 L12 14 L8 11 L4 14 L5 9 L1 7 L6 6 Z" fill="#d0d0d0" stroke="#c0c0c0"/></g><rect x="521.1" y="57" width="1" height="16" fill="#c6c6c6"/><g transform="translate(525.3,58.6) scale(0.8)"><path d="M2 11 L8 3 L14 6 L10 13 L4 14 Z" fill="#fff" stroke="#111" stroke-width="1.2"/><path d="M3 12 L10 8" stroke="#111"/></g><rect x="540.2" y="57" width="17" height="16" fill="#c4dcf3"/><g transform="translate(542.3,58.6) scale(0.8)"><path d="M2 6 L7 2 L14 4 L14 11 L9 15 L2 13 Z M2 6 L9 8 L14 4 M9 8 L9 15" fill="#eef" stroke="#1a2a5a" stroke-width="1.2"/></g><g transform="translate(558.8,58.6) scale(0.8)"><path d="M2 5 L5 3 L11 3 L14 5" stroke="#c0c0c0" fill="none"/><path d="M6 14 L8 8 L10 14 Z" fill="#c0c0c0"/></g><rect x="577.8" y="54" width="1" height="22" fill="#c8c8c8"/><rect x="581.6" y="57" width="1" height="1" fill="#a8a8a8"/><rect x="583.6" y="58" width="1" height="1" fill="#c8c8c8"/><rect x="581.6" y="60" width="1" height="1" fill="#a8a8a8"/><rect x="583.6" y="61" width="1" height="1" fill="#c8c8c8"/><rect x="581.6" y="63" width="1" height="1" fill="#a8a8a8"/><rect x="583.6" y="64" width="1" height="1" fill="#c8c8c8"/><rect x="581.6" y="66" width="1" height="1" fill="#a8a8a8"/><rect x="583.6" y="67" width="1" height="1" fill="#c8c8c8"/><rect x="581.6" y="69" width="1" height="1" fill="#a8a8a8"/><rect x="583.6" y="70" width="1" height="1" fill="#c8c8c8"/><rect x="581.6" y="72" width="1" height="1" fill="#a8a8a8"/><rect x="583.6" y="73" width="1" height="1" fill="#c8c8c8"/><g transform="translate(587.6,58.6) scale(0.8)"><path d="M3 3 L14 2 M2 6 L13 5 M3 9 L14 8 M2 12 L13 11 M3 14 L12 14" stroke="#111" stroke-width="1.6"/></g><g transform="translate(603.6,58.6) scale(0.8)"><rect x="2" y="1" width="6" height="11" rx="3" fill="#2a8a80" stroke="#0d3a3a"/><path d="M8 13 L10 15 L14 11" stroke="#222" stroke-width="1.3" fill="none"/></g><g transform="translate(619.6,58.6) scale(0.8)"><rect x="1" y="1" width="6" height="11" rx="3" fill="#2a8a80" stroke="#0d3a3a"/><path d="M8 6 L8 14 L10 12 L12 15 L13 14 L11 11 L14 11 Z" fill="#fff" stroke="#333"/></g><g transform="translate(636.6,58.6) scale(0.8)"><path d="M3 6 Q6 2 10 4 L9 12 L6 13 Z" fill="#1a7a70" stroke="#113"/><path d="M1 15 L15 1" stroke="#1a2a4a" stroke-width="1.3"/></g><g transform="translate(653.6,58.6) scale(0.8)"><path d="M2 3 L7 3 L7 6 L5 6 L5 13 L3 13 L3 6 L2 6 Z M9 3 L14 3 L14 10 L12 10 L12 13 L10 13 L10 6 L9 6 Z" fill="#222"/><circle cx="12" cy="5" r="2" fill="#fff" stroke="#222"/></g><rect x="670.8" y="57" width="1" height="16" fill="#c6c6c6"/><g transform="translate(675.3,58.6) scale(0.8)"><path d="M4 15 L4 2 M1.5 5 L4 2 L6.5 5" stroke="#111" stroke-width="1.3" fill="none"/><path d="M8 8 L13 14 M13 8 L8 14" stroke="#888" stroke-width="1.2"/></g><g transform="translate(691.9,58.6) scale(0.8)"><path d="M4 15 L4 2 M1.5 5 L4 2 L6.5 5" stroke="#111" stroke-width="1.3" fill="none"/><path d="M8 7 L10.5 10.5 L13 7 M10.5 10.5 L10.5 14" stroke="#888" stroke-width="1.2" fill="none"/></g><rect x="707.1" y="57" width="17" height="16" fill="#c4dcf3"/><g transform="translate(709.2,58.6) scale(0.8)"><path d="M4 15 L4 2 M1.5 5 L4 2 L6.5 5" stroke="#111" stroke-width="1.3" fill="none"/><path d="M8 8 L13 8 L8 13 L13 13" stroke="#555" stroke-width="1.2" fill="none"/></g><rect x="726.5" y="57" width="1" height="16" fill="#c6c6c6"/><rect x="728.9" y="57" width="17" height="16" fill="#c4dcf3"/><g transform="translate(731,58.6) scale(0.8)"><circle cx="8" cy="4" r="2.5" fill="#30b8c0"/><path d="M8 6 L8 15" stroke="#888" stroke-width="2"/><path d="M6 3 L8 1 L10 3" stroke="#30b8c0"/></g><rect x="748.5" y="57" width="1" height="16" fill="#c6c6c6"/><g transform="translate(753.6,58.6) scale(0.8)"><rect x="4" y="2" width="10" height="9" fill="#fff" stroke="#555"/><path d="M2 5 L2 14 L11 14" stroke="#666" fill="none"/><circle cx="8" cy="6" r="2" fill="none" stroke="#222" stroke-width="1.3"/></g><g transform="translate(769.3,58.6) scale(0.8)"><rect x="4" y="2" width="10" height="9" fill="#f4f4f4" stroke="#c0c0c0"/><path d="M2 5 L2 14 L11 14" stroke="#c0c0c0" fill="none"/></g><g transform="translate(786.6,58.6) scale(0.8)"><rect x="0" y="0" width="16" height="16" fill="#f8f6c0"/><circle cx="4" cy="5" r="1.3" fill="#222"/><path d="M8 9 L8 14 M8 9 L12 14" stroke="#222" stroke-width="1.3"/></g><rect x="801.1" y="57" width="17" height="16" fill="#c4dcf3"/><g transform="translate(803.2,58.6) scale(0.8)"><ellipse cx="8" cy="9" rx="4.5" ry="5.5" fill="#e8b060"/><ellipse cx="8" cy="10" rx="2" ry="3" fill="#111"/><path d="M3 2 L6 5 M13 2 L10 5" stroke="#b02020" stroke-width="1.3"/></g><rect x="820.8" y="57" width="1" height="16" fill="#c6c6c6"/><g transform="translate(824.9,58.6) scale(0.8)"><path d="M2 13 L12 3" stroke="#111" stroke-dasharray="2 1.5" stroke-width="1.3"/><path d="M10 5 L14 2 L13 6 Z M1 12 L5 14 L3 10 Z" fill="#111"/><path d="M7 14 L13 14" stroke="#111" stroke-dasharray="1 1.5"/></g><g transform="translate(842.3,58.6) scale(0.8)"><path d="M2 4 L6 2 L8 4" stroke="#222" fill="none"/><ellipse cx="9" cy="10" rx="5.5" ry="5" fill="#1a1a7a"/><rect x="8" y="6" width="2" height="10" fill="#888"/></g><g transform="translate(858.4,58.6) scale(0.8)"><path d="M4 2 L4 7 M10 2 L10 7 M2 10 L14 10 M6 12 L6 15 M12 12 L12 15" stroke="#b8b8b8" stroke-width="1.2"/></g><g transform="translate(875.8,58.6) scale(0.8)"><circle cx="10" cy="10" r="3.5" fill="#b0b0b0"/><path d="M2 3 L6 5 M4 8 L8 12" stroke="#bbb" stroke-width="1.3"/></g><g transform="translate(892.6,58.6) scale(0.8)"><path d="M2 2 L6 2 L6 6 M3 9 L8 9" stroke="#c0c0c0"/><rect x="9" y="3" width="5" height="11" rx="2" fill="#b0b0b0"/></g><rect x="909.1" y="57" width="1" height="16" fill="#c6c6c6"/><g transform="translate(914,58.6) scale(0.8)"><path d="M1.5 3 L5 1 L5 5 Z" fill="none" stroke="#111" stroke-width="1"/><path d="M5 3 L7 6" stroke="#111"/><path d="M3 9 L5 6 L14 6 L12 9 Z" fill="#fff" stroke="#111" stroke-width="1.2"/><rect x="3" y="9" width="9" height="5" fill="#2a6a64" stroke="#111" stroke-width="1.2"/><path d="M12 9 L14 6 L14 11 L12 14" fill="#1f5550" stroke="#111"/><rect x="4.5" y="11" width="6" height="2" fill="#e8f0f0"/></g><g transform="translate(931,58.6) scale(0.8)"><path d="M1.5 3 L5 1 L5 5 Z" fill="none" stroke="#111" stroke-width="1"/><path d="M5 3 L7 6" stroke="#111"/><path d="M3 9 L5 6 L14 6 L12 9 Z" fill="#fff" stroke="#111" stroke-width="1.2"/><rect x="3" y="9" width="9" height="5" fill="#2a6a64" stroke="#111" stroke-width="1.2"/><path d="M12 9 L14 6 L14 11 L12 14" fill="#1f5550" stroke="#111"/><rect x="4.5" y="11" width="6" height="2" fill="#e8f0f0"/></g><g transform="translate(947.5,58.6) scale(0.8)"><path d="M1.5 3 L5 1 L5 5 Z" fill="none" stroke="#111" stroke-width="1"/><path d="M5 3 L7 6" stroke="#111"/><path d="M3 9 L5 6 L14 6 L12 9 Z" fill="#fff" stroke="#111" stroke-width="1.2"/><rect x="3" y="9" width="9" height="5" fill="#2a6a64" stroke="#111" stroke-width="1.2"/><path d="M12 9 L14 6 L14 11 L12 14" fill="#1f5550" stroke="#111"/><rect x="4.5" y="11" width="6" height="2" fill="#e8f0f0"/></g><g transform="translate(964,58.6) scale(0.8)"><path d="M1.5 3 L5 1 L5 5 Z" fill="none" stroke="#111" stroke-width="1"/><path d="M5 3 L7 6" stroke="#111"/><path d="M3 9 L5 6 L14 6 L12 9 Z" fill="#fff" stroke="#111" stroke-width="1.2"/><rect x="3" y="9" width="9" height="5" fill="#fff" stroke="#111" stroke-width="1.2"/><path d="M12 9 L14 6 L14 11 L12 14" fill="#1f5550" stroke="#111"/></g><g transform="translate(980.6,58.6) scale(0.8)"><path d="M1.5 3 L5 1 L5 5 Z" fill="none" stroke="#111" stroke-width="1"/><path d="M5 3 L7 6" stroke="#111"/><path d="M3 9 L5 6 L14 6 L12 9 Z" fill="#fff" stroke="#111" stroke-width="1.2"/><rect x="3" y="9" width="9" height="5" fill="#2a6a64" stroke="#111" stroke-width="1.2"/><path d="M12 9 L14 6 L14 11 L12 14" fill="#1f5550" stroke="#111"/><rect x="4.5" y="11" width="6" height="2" fill="#e8f0f0"/></g><g transform="translate(997.2,58.6) scale(0.8)"><path d="M1.5 3 L5 1 L5 5 Z" fill="none" stroke="#111" stroke-width="1"/><path d="M5 3 L7 6" stroke="#111"/><path d="M3 9 L5 6 L14 6 L12 9 Z" fill="#fff" stroke="#111" stroke-width="1.2"/><rect x="3" y="9" width="9" height="5" fill="#2a6a64" stroke="#111" stroke-width="1.2"/><path d="M12 9 L14 6 L14 11 L12 14" fill="#1f5550" stroke="#111"/><rect x="4.5" y="11" width="6" height="2" fill="#e8f0f0"/></g><g transform="translate(1013.2,58.6) scale(0.8)"><path d="M1.5 3 L5 1 L5 5 Z" fill="none" stroke="#111" stroke-width="1"/><path d="M8 5 L8 10 L3 15 M8 10 L13 15" stroke="#111" stroke-width="1.4" fill="none"/></g><g transform="translate(1029.6,58.6) scale(0.8)"><path d="M1.5 3 L5 1 L5 5 Z" fill="none" stroke="#111" stroke-width="1"/><path d="M8 4 L8 14 M3 10 L8 14 L13 10" stroke="#111" stroke-width="1.4" fill="none"/></g><rect x="1046.9" y="57" width="1" height="16" fill="#c6c6c6"/><g transform="translate(1051.9,58.6) scale(0.8)"><path d="M7 1 L7 14 M1 7 L13 7" stroke="#111" stroke-width="1.2"/><path d="M5 3 L7 1 L9 3 M5 12 L7 14 L9 12 M3 5 L1 7 L3 9" stroke="#111" stroke-width="1.4" fill="none"/><path d="M10 10 L14 15 M14 10 L10 15" stroke="#d02020" stroke-width="1.6"/></g><g transform="translate(1068.8,58.6) scale(0.8)"><path d="M6 1 L6 14 M3 14 L9 14 M4 3 L6 1 L8 3" stroke="#111" stroke-width="1.4" fill="none"/><path d="M10 10 L14 15 M14 10 L10 15" stroke="#d02020" stroke-width="1.6"/></g><g transform="translate(1084.9,58.6) scale(0.8)"><path d="M7 2 L7 14 M1 8 L9 8" stroke="#111" stroke-width="1.2"/><path d="M4 2 L10 2 M4 14 L9 14" stroke="#111" stroke-width="1.3"/><path d="M10 10 L14 15 M14 10 L10 15" stroke="#d02020" stroke-width="1.6"/></g><g transform="translate(1099.3,58.6) scale(0.8)"><circle cx="6" cy="6" r="4.5" fill="#c8d8f0" stroke="#2a4ab0" stroke-width="1.2"/><path d="M6 1 L6 11 M1 6 L11 6" stroke="#2a4ab0"/><circle cx="11" cy="12" r="3" fill="#fff" stroke="#2a4ab0"/></g><rect x="1119.1" y="57" width="1" height="16" fill="#c6c6c6"/><g transform="translate(1123.6,58.6) scale(0.8)"><rect x="2" y="5" width="12" height="6" fill="#888"/><path d="M2 3 L14 3 M2 13 L14 13" stroke="#aaa" stroke-dasharray="1 1" stroke-width="1.5"/><path d="M4 5 L4 11 M8 5 L8 11 M12 5 L12 11" stroke="#ccc"/></g><rect x="1143.2" y="54" width="1" height="22" fill="#c8c8c8"/>
<!-- viewport -->
<rect x="1" y="77" width="1355" height="657" fill="#000"/>
<defs>
<filter id="sp" filterUnits="userSpaceOnUse" x="300" y="180" width="760" height="480" color-interpolation-filters="sRGB">
 <feTurbulence type="fractalNoise" baseFrequency="2.5" numOctaves="1" seed="7" result="n"/>
 <feColorMatrix in="n" type="matrix" values="2.2 0 0 0 -0.55  2.2 0 0 0 -0.55  2.2 0 0 0 -0.55  0 0 0 0 1" result="g"/>
 <feComposite in="SourceGraphic" in2="g" operator="arithmetic" k1="1" k2="0" k3="0" k4="0"/>
</filter>
<filter id="sp2" filterUnits="userSpaceOnUse" x="300" y="180" width="760" height="480" color-interpolation-filters="sRGB">
 <feTurbulence type="fractalNoise" baseFrequency="2.3" numOctaves="1" seed="11" result="n"/>
 <feColorMatrix in="n" type="matrix" values="2.4 0 0 0 -0.65  2.4 0 0 0 -0.65  2.4 0 0 0 -0.65  0 0 0 0 1" result="g"/>
 <feComposite in="SourceGraphic" in2="g" operator="arithmetic" k1="1" k2="0" k3="0" k4="0"/>
</filter>
<linearGradient id="cylA" x1="0" x2="1" y1="0" y2="0"><stop offset="0" stop-color="#8a8a8a"/><stop offset="0.45" stop-color="#a0a0a0"/><stop offset="0.8" stop-color="#b8b8b8"/><stop offset="1" stop-color="#909090"/></linearGradient>
<linearGradient id="cylB" x1="0" x2="1" y1="0" y2="0"><stop offset="0" stop-color="#9a9a9a"/><stop offset="0.6" stop-color="#b0b0b0"/><stop offset="0.92" stop-color="#c8c8c8"/><stop offset="1" stop-color="#8a8a8a"/></linearGradient>
<linearGradient id="cylD" x1="0" x2="1" y1="0" y2="0"><stop offset="0" stop-color="#9a9a9a"/><stop offset="0.4" stop-color="#c4c4c4"/><stop offset="1" stop-color="#a0a0a0"/></linearGradient>
<linearGradient id="cylE" x1="0" x2="1" y1="0" y2="0"><stop offset="0" stop-color="#b8b8b8"/><stop offset="0.3" stop-color="#949494"/><stop offset="1" stop-color="#888888"/></linearGradient>
<linearGradient id="gnd" gradientUnits="userSpaceOnUse" x1="312" y1="400" x2="1046" y2="520"><stop offset="0" stop-color="#5a5a5a"/><stop offset="0.5" stop-color="#626262"/><stop offset="1" stop-color="#6a6a6a"/></linearGradient>
<filter id="bl" x="-20%" y="-20%" width="140%" height="140%"><feGaussianBlur stdDeviation="2"/></filter>
</defs>
<g filter="url(#sp)"><polygon points="312,465 356,432 394,405 422,379 431,370 450,364 504,352 560,338 613,330 670,314 700,296 732,272 755,250 832,280 1046,382 1037,416 1017,450 995,465 965,493 940,510 897,549 850,586 809,610 772,633 758,642 727,649 675,650 640,639 581,620 560,609 538,596 540,580 533,564 512,555 490,555 475,564 432,542 400,529 380,517 340,488" fill="url(#gnd)" /><polygon points="1046,382 1037,416 1017,450 995,465 965,493 940,510 897,549 850,586 845,578 890,538 990,440 1030,400" fill="#6e6e6e" /><polygon points="732,272 755,250 832,280 1010,365 1000,392 980,420 960,432 860,390 780,352 690,318" fill="#5a5a5a" /><polygon points="690,322 700,318 962,426 956,434" fill="#222222" /><polygon points="1014,384 1022,388 988,424 980,420" fill="#222222" /><path d="M475 564 L490 555 L512 555 L533 564 L540 580 L538 596 L520 592 L495 578 Z" fill="#262626"/><polygon points="426,370 504,352 545,345 560,360 520,385 470,405 420,420 400,395" fill="#6c6c6c" /><ellipse cx="482" cy="372" rx="20" ry="8" transform="rotate(-15 482 372)" fill="#383838"/><polygon points="470,425 540,380 552,388 482,435" fill="#2e2e2e" /><polygon points="500,440 555,405 560,415 508,450" fill="#3a3a3a" /><ellipse cx="585" cy="440" rx="48" ry="16" transform="rotate(15 585 440)" fill="#222"/><polygon points="604,430 650,410 700,425 663,467 612,455" fill="#646464" /><polygon points="626,478 688,425 696,430 634,484" fill="#2a2a2a" /><polygon points="642,462 700,438 732,446 730,495 700,500 660,485" fill="#4a4a4a" /><polygon points="521,522 551,497 600,514 590,545 560,548 522,532" fill="#949494" /><polygon points="522,532 560,548 590,545 585,556 548,560 518,542" fill="#353535" /><polygon points="428,508 462,498 478,515 462,535 436,530" fill="#444444" /><polygon points="397,477 466,498 466,500 397,479" fill="#2a2a2a" /><polygon points="484,530 496,512 512,528 500,545" fill="#2a2a2a" /><polygon points="590,570 660,541 675,555 639,587" fill="#151515" /><polygon points="700,498 745,512 790,515 812,530 790,546 730,532" fill="#3a3a3a" /><polygon points="842,540 888,522 893,540 858,575 846,572" fill="#262626" /><polygon points="660,430 700,418 735,438 728,470 690,480" fill="#505050" /></g>
<g filter="url(#sp2)"><path d="M416 420 L476 420 L471 473 Q446 490 422 474 Z" fill="url(#cylA)"/><ellipse cx="446" cy="417" rx="31" ry="19" fill="#2c2c2c" stroke="#a8a8a8" stroke-width="2.5"/><ellipse cx="443" cy="421" rx="20" ry="11" fill="#959595"/><path d="M560 324 L613 324 L611 425 Q586 442 562 425 Z" fill="url(#cylB)"/><ellipse cx="586" cy="323" rx="27" ry="15" fill="#3a3a3a" stroke="#c8c8c8" stroke-width="2.5"/><ellipse cx="588" cy="327" rx="19" ry="9" fill="#6a6a6a"/><path d="M562 340 Q560 390 565 425 L575 430 L572 340 Z" fill="#7a7a7a"/><path d="M527 322 L550 304" stroke="#b4b4b4" stroke-width="13" stroke-linecap="round"/><path d="M512 330 L540 340 L560 356 L558 385 L530 378 L515 355 Z" fill="#a0a0a0"/><circle cx="509" cy="320" r="7" fill="#a8a8a8"/><circle cx="509" cy="338" r="7" fill="#a8a8a8"/><circle cx="526" cy="336" r="9" fill="#a8a8a8"/><circle cx="540" cy="326" r="7" fill="#a8a8a8"/><circle cx="530" cy="356" r="8" fill="#a8a8a8"/><circle cx="545" cy="350" r="8" fill="#a8a8a8"/><circle cx="630" cy="385" r="9" fill="#848484"/><circle cx="650" cy="393" r="8" fill="#848484"/><circle cx="625" cy="405" r="7" fill="#848484"/><circle cx="640" cy="372" r="6" fill="#848484"/><path d="M604 514 L656 514 L654 566 Q630 582 606 566 Z" fill="url(#cylD)"/><ellipse cx="630" cy="510" rx="29" ry="16" fill="#262626" stroke="#a0a0a0" stroke-width="2"/><ellipse cx="628" cy="513" rx="20" ry="10" fill="#a8a8a8"/><path d="M751 406 L805 406 L795 505 Q770 520 746 505 Z" fill="url(#cylE)"/><ellipse cx="778" cy="404" rx="27" ry="16" fill="#383838" stroke="#b0b0b0" stroke-width="2.5"/><ellipse cx="780" cy="407" rx="16" ry="9" fill="#686868"/><circle cx="800" cy="466" r="12" fill="none" stroke="#a8a8a8" stroke-width="5"/><circle cx="815" cy="442" r="10" fill="none" stroke="#a8a8a8" stroke-width="5"/><circle cx="829" cy="478" r="12" fill="none" stroke="#a8a8a8" stroke-width="5"/><circle cx="852" cy="490" r="11" fill="none" stroke="#a8a8a8" stroke-width="5"/><circle cx="838" cy="457" r="9" fill="none" stroke="#a8a8a8" stroke-width="5"/><circle cx="818" cy="500" r="10" fill="none" stroke="#a8a8a8" stroke-width="5"/><circle cx="726" cy="432" r="11" fill="none" stroke="#a8a8a8" stroke-width="5"/><circle cx="694" cy="416" r="10" fill="none" stroke="#a8a8a8" stroke-width="5"/><circle cx="708" cy="444" r="8" fill="none" stroke="#a8a8a8" stroke-width="5"/><path d="M775 302 L844 302 L844 330 Q810 346 775 330 Z" fill="#bcbcbc"/><ellipse cx="809" cy="302" rx="35" ry="11" fill="#b4b4b4"/><path d="M790 236 L834 240 L836 300 L788 300 Z" fill="#c0c0c0"/><path d="M732 236 L758 214 L790 220 L800 250 L796 268 L770 268 L745 262 L732 252 Z" fill="#b8b8b8"/><circle cx="810" cy="218" r="9" fill="#bcbcbc"/><circle cx="837" cy="233" r="8" fill="#bcbcbc"/><circle cx="790" cy="234" r="8" fill="#bcbcbc"/><circle cx="762" cy="222" r="8" fill="#bcbcbc"/><circle cx="741" cy="240" r="8" fill="#bcbcbc"/><circle cx="752" cy="255" r="7" fill="#bcbcbc"/><circle cx="775" cy="250" r="8" fill="#bcbcbc"/><circle cx="822" cy="236" r="7" fill="#bcbcbc"/><circle cx="800" cy="280" r="8" fill="#bcbcbc"/><circle cx="786" cy="276" r="8" fill="#4a4a4a"/><path d="M760 240 L790 246" stroke="#404040" stroke-width="3"/><path d="M925 372 L988 372 L988 392 Q956 408 925 392 Z" fill="#b4b4b4"/><ellipse cx="956" cy="372" rx="32" ry="13" fill="#b0b0b0"/><path d="M880 296 L905 284 L935 290 L950 300 L948 340 L930 345 L890 330 Z" fill="#b0b0b0"/><path d="M945 290 L980 300 L988 320 L986 370 L945 370 L938 330 Z" fill="#bababa"/><polygon points="958,322 986,304 988,356 962,366" fill="#363636" /><circle cx="960" cy="282" r="8" fill="#b8b8b8"/><circle cx="986" cy="293" r="7" fill="#b8b8b8"/><circle cx="905" cy="284" r="6" fill="#b8b8b8"/><circle cx="918" cy="290" r="6" fill="#b8b8b8"/><circle cx="945" cy="292" r="6" fill="#b8b8b8"/><circle cx="932" cy="305" r="7" fill="#b8b8b8"/><path d="M905 284 L945 294" stroke="#404040" stroke-width="2.5"/><polygon points="838,347 868,318 905,336 876,370" fill="#a8a8a8" /><path d="M852 342 L880 326 M858 350 L886 334 M864 358 L892 342" stroke="#383838" stroke-width="2"/><polygon points="934,500 962,452 978,441 972,480 946,506" fill="#999" /><polygon points="818,540 842,532 845,578 826,584" fill="#a8a8a8" /><polygon points="842,532 855,525 858,545 845,550" fill="#909090" /><path d="M540 395 Q522 420 530 448 M552 400 Q540 425 548 452 M600 440 Q620 452 640 450" fill="none" stroke="#c0c0c0" stroke-width="2"/><path d="M700 418 Q690 460 705 500 M690 520 L760 548" fill="none" stroke="#a0a0a0" stroke-width="2"/><path d="M430 478 Q446 492 470 478" fill="none" stroke="#202020" stroke-width="3"/></g>
<ellipse cx="740" cy="210" rx="7" ry="13" transform="rotate(25 740 210)" fill="none" stroke="#bdbdbd" stroke-width="1.6"/><path d="M735 217 L746 204" stroke="#a0a0a0" stroke-width="1.2"/><ellipse cx="739" cy="266" rx="6" ry="9" transform="rotate(25 739 266)" fill="none" stroke="#909090" stroke-width="1.4"/><ellipse cx="887" cy="276" rx="7" ry="12" transform="rotate(25 887 276)" fill="none" stroke="#b0b0b0" stroke-width="1.6"/><path d="M882 283 L893 270" stroke="#a0a0a0" stroke-width="1.2"/><path d="M750 269 L729 332 M840 243 L874 318 M985 300 L1005 365 M752 420 L744 520 M612 340 L605 430" stroke="#b0b0b0" stroke-width="1.2" opacity="0.75"/><g transform="translate(322,427)"><path d="M4 9 L2 5 Q2 4 3 4.5 L5 7 L4 2.5 Q4 1.5 5 2 L7 6 L7 1.5 Q8 0.5 9 1.5 L9 6 L10 2.5 Q11 2 11.5 3 L11.5 10 Q11 14 7 14 Q4 14 3 11 Z" fill="none" stroke="#e8e8e8" stroke-width="0.9"/></g><path d="M675 405 L685 405 M680 400 L680 410" stroke="#d0d0d0" stroke-width="1"/>
<!-- right toolbar -->
<rect x="1357" y="80" width="20" height="654" fill="#f0f0f0"/>
<rect x="1359" y="83" width="17" height="1" fill="#c4c4c4"/>
<g transform="translate(1358.5,81.6)"><path d="M3 9 L7 6 L11 9 L7 12 Z" fill="#c8c870"/><path d="M5 8 L9 10" stroke="#888"/><path d="M10 1 L11 3.5 L13.5 2.5 L12 4.5 L14.5 6 L11.8 6 L11 8.5 L10 6 L7.5 6.5 L9 4.5 Z" fill="#e6e62a"/></g><g transform="translate(1358.5,99.2)"><path d="M2 6 L10 13" stroke="#111" stroke-width="1.6"/><path d="M10 1 L11 3.5 L13.5 2.5 L12 4.5 L14.5 6 L11.8 6 L11 8.5 L10 6 L7.5 6.5 L9 4.5 Z" fill="#e6e62a"/></g><rect x="1359" y="117.5" width="17" height="1" fill="#c4c4c4"/><g transform="translate(1358.5,122.5)"><path d="M1 13 L5 8 L12 8 L8 13 Z" fill="#444" stroke="#222"/><path d="M10 1 L11 3.5 L13.5 2.5 L12 4.5 L14.5 6 L11.8 6 L11 8.5 L10 6 L7.5 6.5 L9 4.5 Z" fill="#e6e62a"/></g><g transform="translate(1358.5,138)"><path d="M4 5 L4 12 L9 12" stroke="#888" stroke-width="2" fill="none"/><path d="M10 1 L11 3.5 L13.5 2.5 L12 4.5 L14.5 6 L11.8 6 L11 8.5 L10 6 L7.5 6.5 L9 4.5 Z" fill="#e6e62a"/></g><g transform="translate(1358.5,154)"><path d="M3 13 L3 8 L8 8 L8 5" stroke="#888" stroke-width="2.2" fill="none"/><path d="M10 1 L11 3.5 L13.5 2.5 L12 4.5 L14.5 6 L11.8 6 L11 8.5 L10 6 L7.5 6.5 L9 4.5 Z" fill="#e6e62a"/></g><g transform="translate(1358.5,170)"><path d="M4 13 L4 6 L9 6" stroke="#999" stroke-width="2" fill="none"/><path d="M6 10 L9 10" stroke="#999" stroke-width="2"/><path d="M10 1 L11 3.5 L13.5 2.5 L12 4.5 L14.5 6 L11.8 6 L11 8.5 L10 6 L7.5 6.5 L9 4.5 Z" fill="#e6e62a"/></g><g transform="translate(1358.5,187)"><path d="M3 13 L3 7 L11 7 L11 13 Z" fill="none" stroke="#999" stroke-width="2"/><path d="M10 1 L11 3.5 L13.5 2.5 L12 4.5 L14.5 6 L11.8 6 L11 8.5 L10 6 L7.5 6.5 L9 4.5 Z" fill="#e6e62a"/></g><g transform="translate(1358.5,203.5)"><path d="M4 5 L4 12 L11 12" stroke="#999" stroke-width="2" fill="none"/><path d="M10 1 L11 3.5 L13.5 2.5 L12 4.5 L14.5 6 L11.8 6 L11 8.5 L10 6 L7.5 6.5 L9 4.5 Z" fill="#e6e62a"/></g><rect x="1359" y="222" width="17" height="1" fill="#c4c4c4"/><g transform="translate(1358.5,228)"><path d="M6 3 L10 13 L2 13 Z" fill="#666"/><path d="M10 1 L11 3.5 L13.5 2.5 L12 4.5 L14.5 6 L11.8 6 L11 8.5 L10 6 L7.5 6.5 L9 4.5 Z" fill="#e6e62a"/></g><g transform="translate(1358.5,244.5)"><rect x="3" y="5" width="6" height="9" rx="1.5" fill="#555"/><path d="M10 1 L11 3.5 L13.5 2.5 L12 4.5 L14.5 6 L11.8 6 L11 8.5 L10 6 L7.5 6.5 L9 4.5 Z" fill="#e6e62a"/></g><g transform="translate(1358.5,261)"><circle cx="7" cy="10" r="4" fill="#5a5a5a"/><path d="M10 1 L11 3.5 L13.5 2.5 L12 4.5 L14.5 6 L11.8 6 L11 8.5 L10 6 L7.5 6.5 L9 4.5 Z" fill="#e6e62a"/></g><g transform="translate(1358.5,277)"><ellipse cx="7" cy="10" rx="6" ry="3.5" fill="none" stroke="#555" stroke-width="2"/><path d="M10 1 L11 3.5 L13.5 2.5 L12 4.5 L14.5 6 L11.8 6 L11 8.5 L10 6 L7.5 6.5 L9 4.5 Z" fill="#e6e62a"/></g><rect x="1359" y="294.5" width="17" height="1" fill="#c4c4c4"/><g transform="translate(1358.5,300.5)"><path d="M3 5 Q10 5 10 13" stroke="#555" stroke-width="2.5" fill="none"/><path d="M10 1 L11 3.5 L13.5 2.5 L12 4.5 L14.5 6 L11.8 6 L11 8.5 L10 6 L7.5 6.5 L9 4.5 Z" fill="#e6e62a"/></g><g transform="translate(1358.5,317)"><path d="M2 9 L13 9 L12 12 L3 12 Z" fill="#555"/><path d="M10 1 L11 3.5 L13.5 2.5 L12 4.5 L14.5 6 L11.8 6 L11 8.5 L10 6 L7.5 6.5 L9 4.5 Z" fill="#e6e62a"/></g><g transform="translate(1358.5,332.5)"><path d="M6 5 L9 12 L3 12 Z" fill="#555"/><path d="M10 1 L11 3.5 L13.5 2.5 L12 4.5 L14.5 6 L11.8 6 L11 8.5 L10 6 L7.5 6.5 L9 4.5 Z" fill="#e6e62a"/></g><g transform="translate(1358.5,347.5)"><path d="M2 3 L11 13 M11 3 L2 13 M2 3 L2 13 M11 3 L11 13" stroke="#444" stroke-width="1.5"/><path d="M10 1 L11 3.5 L13.5 2.5 L12 4.5 L14.5 6 L11.8 6 L11 8.5 L10 6 L7.5 6.5 L9 4.5 Z" fill="#e6e62a"/></g><g transform="translate(1358.5,364)"><path d="M2 12 L6 7 L10 12 Z" fill="none" stroke="#555" stroke-width="1.5"/><path d="M10 1 L11 3.5 L13.5 2.5 L12 4.5 L14.5 6 L11.8 6 L11 8.5 L10 6 L7.5 6.5 L9 4.5 Z" fill="#e6e62a"/></g><rect x="1359" y="382.5" width="17" height="1" fill="#c4c4c4"/><g transform="translate(1358.5,389.5)"><rect x="2" y="7" width="9" height="7" fill="#555"/><path d="M10 1 L11 3.5 L13.5 2.5 L12 4.5 L14.5 6 L11.8 6 L11 8.5 L10 6 L7.5 6.5 L9 4.5 Z" fill="#e6e62a"/></g><g transform="translate(1358.5,404.5)"><circle cx="6" cy="4" r="1.5" fill="#333"/><path d="M6 7 L6 13 M3 13 L9 13" stroke="#333" stroke-width="2"/><path d="M10 1 L11 3.5 L13.5 2.5 L12 4.5 L14.5 6 L11.8 6 L11 8.5 L10 6 L7.5 6.5 L9 4.5 Z" fill="#e6e62a"/></g><rect x="1358" y="426.9" width="18" height="16" fill="#c4dcf3"/><g transform="translate(1358.5,426.9)"><path d="M2 5 L9 2 L14 6 L12 14 L4 14 Z" fill="#fff" stroke="#555"/><path d="M8 8 L13 13 L8 14 Z" fill="#2a9a2a"/></g><rect x="1359" y="451.5" width="17" height="1" fill="#c4c4c4"/><g transform="translate(1358.5,456)"><path d="M3 5 L10 2 L13 6 L13 13 L3 13 Z" fill="none" stroke="#aaa" stroke-width="1.4"/></g><g transform="translate(1358.5,472)"><path d="M3 5 Q8 1 13 5 L11 13 L4 12 Z" fill="none" stroke="#aaa" stroke-width="1.4"/></g><g transform="translate(1358.5,488)"><circle cx="8" cy="8" r="4.5" fill="#dede50"/><circle cx="8" cy="8" r="2" fill="#aaa"/></g><g transform="translate(1358.5,505)"><circle cx="8" cy="8" r="5" fill="none" stroke="#999" stroke-width="1.6"/></g><g transform="translate(1358.5,521.7)"><path d="M3 7 L12 5 L13 11 L4 12 Z" fill="#cfcf40"/><path d="M5 6 L5 11" stroke="#888"/></g><g transform="translate(1358.5,538.5)"><circle cx="8" cy="8" r="4.5" fill="#aaa"/></g><g transform="translate(1358.5,554.7)"><circle cx="7" cy="8" r="5" fill="#b03010"/><circle cx="7" cy="8" r="2.2" fill="#f0c040"/><path d="M9 9 L9 15 L11 13 L13 15 L14 14 L12 12 L14 12 Z" fill="#fff" stroke="#222" stroke-width="0.8"/></g><rect x="1359" y="572.7" width="17" height="1" fill="#c4c4c4"/><g transform="translate(1358.5,576)"><path d="M3 3 L10 3 L10 8 L3 8 Z" fill="#999"/><path d="M4 11 Q8 8 13 11 L12 14 L5 14 Z" fill="none" stroke="#999" stroke-width="1.3"/></g><g transform="translate(1358.5,592.7)"><path d="M3 4 L12 3 L12 13 L3 13 Z" fill="#999"/><path d="M9 2 L13 6" stroke="#e8e830" stroke-width="2.2"/></g><rect x="1359" y="611" width="17" height="1" fill="#c4c4c4"/><g transform="translate(1358.5,614.4)"><path d="M3 6 Q8 2 13 6 L11 12 L5 12 Z M5 12 L8 14 L11 12" fill="none" stroke="#aaa" stroke-width="1.3"/></g><g transform="translate(1358.5,631.5)"><path d="M3 6 Q8 2 13 6 L11 12 L5 12 Z M2 14 L14 14" fill="none" stroke="#aaa" stroke-width="1.3"/></g><g transform="translate(1358.5,648.3)"><path d="M3 7 Q8 3 13 7 L12 11 L4 11 Z" fill="none" stroke="#999" stroke-width="1.3"/><path d="M4 12 L12 10" stroke="#d8d840" stroke-width="2"/></g><g transform="translate(1358.5,664)"><path d="M3 6 Q8 2 13 6 L11 12 L5 12 Z" fill="none" stroke="#aaa" stroke-width="1.3"/></g><g transform="translate(1358.5,681.3)"><path d="M3 7 Q8 3 13 7 L11 12 L5 12 Z M3 13 L13 13" fill="none" stroke="#aaa" stroke-width="1.3"/></g><rect x="1359" y="700" width="17" height="1" fill="#c4c4c4"/><g transform="translate(1358.5,702.5)"><path d="M3 13 L10 6 L13 9 L6 15 Z" fill="#8a8a8a"/><path d="M9 2 L13 2 L13 7 Z" fill="#e0e830"/></g><g transform="translate(1358.5,719.7)"><path d="M5 8 L12 8 L12 15 L5 15 Z" fill="#9a9aa8"/><path d="M7 3 L13 3 L13 9 Z" fill="#e0e830"/></g>
<!-- status bar -->
<rect x="1" y="734" width="1377" height="14" fill="#f0f0f0"/>
<rect x="1317" y="735" width="60" height="10" fill="#93b0d2"/>
<rect x="1361" y="746" width="16" height="2" fill="#8ccbe8"/>
</svg>
<div class="t" style="left:18px;top:3.2px;letter-spacing:-0.35px;color:#1a1a1a;transform:scaleX(0.9);transform-origin:0 0">ModelSpace: MASTER :  1</div>
<div class="t" style="left:5px;top:18px">File</div>
<div class="t" style="left:28px;top:18px">Edit</div>
<div class="t" style="left:52.5px;top:18px">Selection</div>
<div class="t" style="left:96.5px;top:18px">View</div>
<div class="t" style="left:125px;top:18px">Viewpoint</div>
<div class="t" style="left:173.5px;top:18px">Create Object</div>
<div class="t" style="left:235.5px;top:18px">Edit Object</div>
<div class="t" style="left:287px;top:18px">Tools</div>
<div class="t" style="left:316.5px;top:18px">User Apps</div>
<div class="t" style="left:364px;top:18px">Help</div>
<div class="t" style="left:3px;top:735px;letter-spacing:-0.2px">Nothing selected.</div>
<div class="t" style="left:1281px;top:735px;letter-spacing:0px">X,Y,Z</div>
</body></html>
